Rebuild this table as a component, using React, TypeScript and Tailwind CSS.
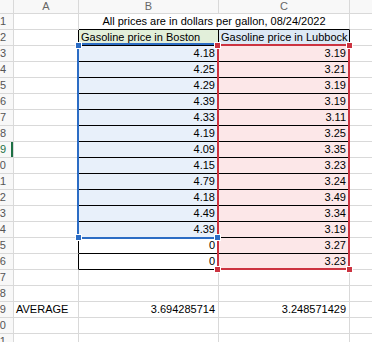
const boston = ['4.18', '4.25', '4.29', '4.39', '4.33', '4.19', '4.09', '4.15', '4.79', '4.18', '4.49', '4.39', '0', '0']
const lubbock = ['3.19', '3.21', '3.19', '3.19', '3.11', '3.25', '3.35', '3.23', '3.24', '3.49', '3.34', '3.19', '3.27', '3.23']

const rows = Array.from({ length: 21 }, (_, i) => i + 1)

function RowHeader({ n }: { n: number }) {
  const active = n === 9
  return (
    <div
      className={
        active
          ? 'relative flex items-center justify-end overflow-hidden whitespace-nowrap border-b border-r border-[#d9d9d9] bg-[#f8f8f8] pr-[7px] text-[#1e7145]'
          : 'relative flex items-center justify-end overflow-hidden whitespace-nowrap border-b border-r border-[#d9d9d9] bg-[#f8f8f8] pr-[7px] text-[#555555]'
      }
    >
      {n}
      {active && <div className="absolute right-0 top-0 h-full w-[2px] bg-[#1e7145]" />}
    </div>
  )
}

function Row({ n }: { n: number }) {
  const inBlock = n >= 2 && n <= 16
  const aClass = inBlock
    ? 'border-b border-r border-b-[#d9d9d9] border-r-black pl-[2px]'
    : 'border-b border-r border-[#d9d9d9] pl-[2px]'

  let b: React.ReactNode
  let c: React.ReactNode
  if (n === 1) {
    b = (
      <div className="col-span-2 border-b border-r border-b-black border-r-[#d9d9d9] text-center">
        All prices are in dollars per gallon, 08/24/2022
      </div>
    )
    c = null
  } else if (n === 2) {
    b = <div className="border-b border-r border-black bg-[#e2efda] pl-[2px]">Gasoline price in Boston</div>
    c = <div className="border-b border-r border-black bg-[#dde9f5] pl-[2px]">Gasoline price in Lubbock</div>
  } else if (n >= 3 && n <= 16) {
    const i = n - 3
    b = (
      <div
        className={
          n <= 14
            ? 'border-b border-r border-black bg-[#e8f0fa] pr-[3px] text-right'
            : 'border-b border-r border-black bg-white pr-[3px] text-right'
        }
      >
        {boston[i]}
      </div>
    )
    c = <div className="border-b border-r border-black bg-[#fce7e8] pr-[3px] text-right">{lubbock[i]}</div>
  } else if (n === 19) {
    b = <div className="border-b border-r border-[#d9d9d9] pr-[3px] text-right">3.694285714</div>
    c = <div className="border-b border-r border-[#d9d9d9] pr-[3px] text-right">3.248571429</div>
  } else {
    b = <div className="border-b border-r border-[#d9d9d9]" />
    c = <div className="border-b border-r border-[#d9d9d9]" />
  }

  return (
    <>
      <RowHeader n={n} />
      <div className={aClass}>{n === 19 ? 'AVERAGE' : ''}</div>
      {b}
      {c}
      <div className="border-b border-[#d9d9d9]" />
    </>
  )
}

export default function App() {
  return (
    <div className="relative h-[342px] w-[372px] overflow-hidden bg-white font-['Liberation_Sans',Arial,sans-serif] text-[11px] leading-[15px] text-black">
      <div className="grid grid-cols-[14px_65px_140px_131px_1fr] grid-rows-[14px_repeat(21,16px)]">
        <div className="border-b border-r border-[#d9d9d9] bg-[#f8f8f8]" />
        <div className="border-b border-r border-[#d9d9d9] bg-[#f8f8f8] text-center leading-[13px] text-[#666666]">A</div>
        <div className="border-b border-r border-[#d9d9d9] bg-[#f8f8f8] text-center leading-[13px] text-[#666666]">B</div>
        <div className="border-b border-r border-[#d9d9d9] bg-[#f8f8f8] text-center leading-[13px] text-[#666666]">C</div>
        <div className="border-b border-[#d9d9d9] bg-[#f8f8f8]" />
        {rows.map((n) => (
          <Row key={n} n={n} />
        ))}
      </div>

      {/* range highlights */}
      <div className="absolute left-[77px] top-[43px] h-[196px] w-[142px] border-2 border-[#2b6cc4]" />
      <div className="absolute left-[217px] top-[44px] h-[226px] w-[133px] border-2 border-[#cc3340]" />

      <div className="absolute left-[214px] top-[42px] h-[7px] w-[7px] border border-white bg-[#cc3340]" />
      <div className="absolute left-[346px] top-[42px] h-[7px] w-[7px] border border-white bg-[#cc3340]" />
      <div className="absolute left-[214px] top-[266px] h-[7px] w-[7px] border border-white bg-[#cc3340]" />
      <div className="absolute left-[346px] top-[266px] h-[7px] w-[7px] border border-white bg-[#cc3340]" />

      <div className="absolute left-[75px] top-[42px] h-[7px] w-[7px] border border-white bg-[#2b6cc4]" />
      <div className="absolute left-[75px] top-[234px] h-[7px] w-[7px] border border-white bg-[#2b6cc4]" />
      <div className="absolute left-[214px] top-[234px] h-[7px] w-[7px] border border-white bg-[#2b6cc4]" />
    </div>
  )
}
